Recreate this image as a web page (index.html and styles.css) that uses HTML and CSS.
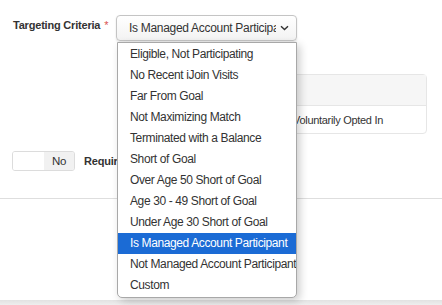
FILE: index.html
```html
<!DOCTYPE html>
<html lang="en">
<head>
    <meta charset="UTF-8">
    <meta name="viewport" content="width=device-width, initial-scale=1.0">
    <title>Targeting Criteria</title>
    <link rel="stylesheet" href="styles.css">
</head>
<body>
    <div class="page">
        <div class="form-row">
            <label class="field-label">Targeting Criteria <span class="req">*</span></label>
            <div class="select-wrap">
                <div class="select-box">
                    <span class="select-value">Is Managed Account Participant</span>
                    <svg class="chevron" width="9" height="6" viewBox="0 0 9 6">
                        <path d="M1 1.2 L4.5 4.6 L8 1.2" fill="none" stroke="#333" stroke-width="1.4"/>
                    </svg>
                </div>
                <ul class="options">
                    <li>Eligible, Not Participating</li>
                    <li>No Recent iJoin Visits</li>
                    <li>Far From Goal</li>
                    <li>Not Maximizing Match</li>
                    <li>Terminated with a Balance</li>
                    <li>Short of Goal</li>
                    <li>Over Age 50 Short of Goal</li>
                    <li>Age 30 - 49 Short of Goal</li>
                    <li>Under Age 30 Short of Goal</li>
                    <li class="selected">Is Managed Account Participant</li>
                    <li>Not Managed Account Participant</li>
                    <li>Custom</li>
                </ul>
            </div>
        </div>

        <div class="panel">
            <div class="panel-head"></div>
            <div class="panel-row">
                <span class="cell"></span>
                <span class="cell">Voluntarily Opted In</span>
            </div>
        </div>

        <div class="toggle-row">
            <div class="toggle">
                <span class="toggle-off"></span>
                <span class="toggle-no">No</span>
            </div>
            <span class="toggle-label">Required</span>
        </div>
    </div>

    <div class="divider"></div>
    <div class="spacer"></div>
    <div class="bottom-bar"></div>
</body>
</html>
```

FILE: styles.css
```css
/* CSS */
body {
    font-family: "Liberation Sans", Arial, sans-serif;
    font-size: 12px;
    letter-spacing: -0.3px;
    color: #333;
    background: #fff;
    margin: 0;
    padding: 0;
}

.page {
    padding: 15px 15px 0 13px;
}

.form-row {
    display: flex;
    align-items: center;
    height: 26px;
}

.field-label {
    font-size: 11px;
    font-weight: bold;
    letter-spacing: -0.2px;
    color: #333;
    width: 103px;
    margin-top: -6px;
    white-space: nowrap;
}

.req {
    color: #d9534f;
    font-weight: normal;
    margin-left: 1px;
}

.select-wrap {
    position: relative;
    width: 181px;
    height: 26px;
}

.select-box {
    display: flex;
    align-items: center;
    justify-content: space-between;
    height: 24px;
    padding: 0 7px 0 12px;
    border: 1px solid #c4c4c4;
    border-radius: 4px;
    background: linear-gradient(#ffffff, #f3f3f3);
    box-shadow: 0 1px 2px rgba(0, 0, 0, 0.12);
}

.select-value {
    width: 147px;
    overflow: hidden;
    white-space: nowrap;
}

.chevron {
    flex: none;
}

.options {
    position: absolute;
    top: 27px;
    left: 1px;
    width: 178px;
    margin: 0;
    padding: 1px 0 1px;
    list-style: none;
    background: #fff;
    border: 1px solid #a8a8a8;
    border-radius: 0 0 5px 5px;
    box-shadow: 3px 3px 8px rgba(0, 0, 0, 0.2);
    letter-spacing: -0.38px;
    z-index: 10;
}

.options li {
    height: 21px;
    line-height: 21px;
    padding-left: 12px;
    white-space: nowrap;
    overflow: hidden;
}

.options li.selected {
    background: #1b6bd5;
    color: #fff;
}

.panel {
    margin-top: 33px;
    margin-left: 190px;
    width: 222px;
    border: 1px solid #e6e6e6;
    border-radius: 4px;
}

.panel-head {
    height: 30px;
    background: #f6f6f6;
    border-bottom: 1px solid #e6e6e6;
}

.panel-row {
    display: grid;
    grid-template-columns: 81px 1fr;
    height: 27px;
    align-items: center;
}

.cell {
    padding-left: 8px;
    font-size: 11px;
}

.toggle-row {
    display: flex;
    align-items: center;
    margin-top: 17px;
    margin-left: -1px;
}

.toggle {
    display: flex;
    width: 61px;
    height: 18px;
    border: 1px solid #dcdcdc;
    border-radius: 3px;
    overflow: hidden;
}

.toggle-off {
    width: 31px;
    background: #fff;
}

.toggle-no {
    flex: 1;
    background: #f1f1f1;
    text-align: center;
    line-height: 18px;
    font-size: 11.5px;
}

.toggle-label {
    margin-left: 9px;
    font-size: 11px;
    font-weight: bold;
    letter-spacing: -0.2px;
    white-space: nowrap;
}

.divider {
    margin-top: 27px;
    border-top: 1px solid #dedede;
}

.spacer {
    height: 101px;
}

.bottom-bar {
    height: 5px;
    background: linear-gradient(#e2e2e2, #eeeeee);
}
```
